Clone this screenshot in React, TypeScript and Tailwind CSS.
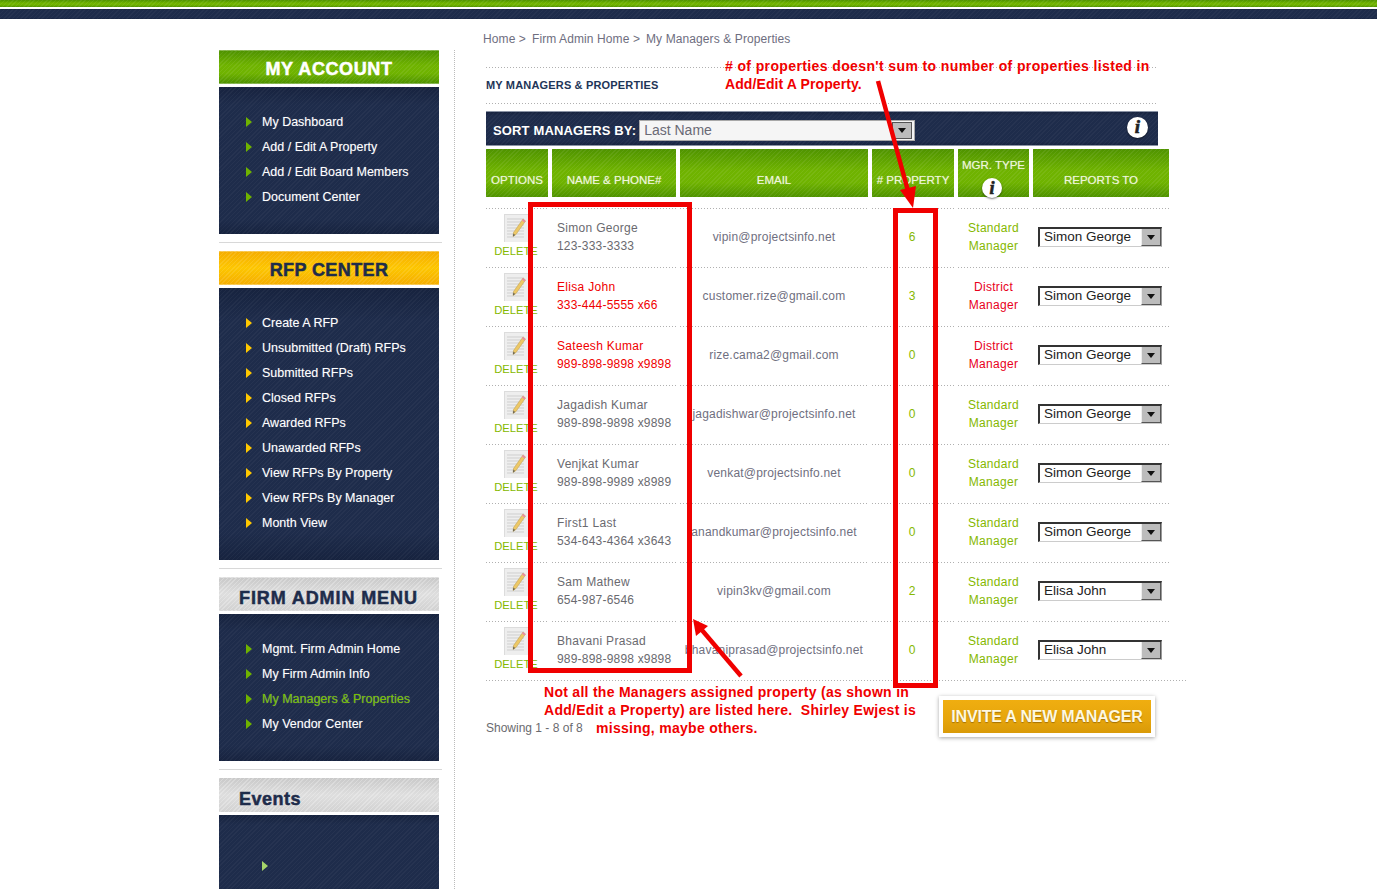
import React from 'react';

const GREEN_BAR = 'bg-[image:repeating-linear-gradient(135deg,rgba(255,255,255,0.07)_0_1px,transparent_1px_3px),linear-gradient(180deg,#4f9300,#6fb300_45%,#6fb300_70%,#4f9300)]';
const NAVY_BAR = 'bg-[image:repeating-linear-gradient(135deg,rgba(255,255,255,0.035)_0_1px,transparent_1px_3px),linear-gradient(180deg,#17233f,#1e2c4b_12%,#1e2c4b_90%,#17233f)]';
const YELLOW_BAR = 'bg-[image:repeating-linear-gradient(135deg,rgba(255,255,255,0.1)_0_1px,transparent_1px_3px),linear-gradient(180deg,#f5ae00,#fdc600_50%,#f5ae00)]';
const ORANGE_BAR = 'bg-[image:linear-gradient(180deg,#f0ae10,#e6a50c_60%,#d99a08)]';
const GRAY_BAR = 'bg-[image:repeating-linear-gradient(135deg,rgba(255,255,255,0.25)_0_1px,transparent_1px_3px),linear-gradient(180deg,#c9c9c9,#dedede_50%,#d2d2d2)]';
const DOTS = 'h-px bg-[image:repeating-linear-gradient(90deg,#b0b0b0_0_1px,transparent_1px_3px)]';
const HEAD_TEXT = 'text-[11.5px] text-[#eef6dc] [text-shadow:0_0_1px_rgba(255,255,255,0.5)]';

const GROUPS = [
  {
    title: 'MY ACCOUNT', bar: GREEN_BAR, cls: 'text-white justify-center pt-[5px] tracking-[0.6px]', arrow: '#6fb300', panel: 'h-[147px]',
    items: ['My Dashboard', 'Add / Edit A Property', 'Add / Edit Board Members', 'Document Center'],
  },
  {
    title: 'RFP CENTER', bar: YELLOW_BAR, cls: 'text-[#1e2c4b] justify-center pt-[5px] tracking-[0.4px]', arrow: '#ffc800', panel: 'h-[272px]',
    items: ['Create A RFP', 'Unsubmitted (Draft) RFPs', 'Submitted RFPs', 'Closed RFPs', 'Awarded RFPs', 'Unawarded RFPs', 'View RFPs By Property', 'View RFPs By Manager', 'Month View'],
  },
  {
    title: 'FIRM ADMIN MENU', bar: GRAY_BAR, cls: 'text-[#1e2c4b] pl-5 pt-[8px] tracking-[0.9px]', arrow: '#6fb300', panel: 'h-[147px]',
    items: ['Mgmt. Firm Admin Home', 'My Firm Admin Info', 'My Managers & Properties', 'My Vendor Center'],
  },
];

const ROWS = [
  { name: 'Simon George', phone: '123-333-3333', email: 'vipin@projectsinfo.net', count: '6', type: 'Standard', boss: 'Simon George' },
  { name: 'Elisa John', phone: '333-444-5555 x66', email: 'customer.rize@gmail.com', count: '3', type: 'District', boss: 'Simon George', red: true },
  { name: 'Sateesh Kumar', phone: '989-898-9898 x9898', email: 'rize.cama2@gmail.com', count: '0', type: 'District', boss: 'Simon George', red: true },
  { name: 'Jagadish Kumar', phone: '989-898-9898 x9898', email: 'jagadishwar@projectsinfo.net', count: '0', type: 'Standard', boss: 'Simon George' },
  { name: 'Venjkat Kumar', phone: '989-898-9989 x8989', email: 'venkat@projectsinfo.net', count: '0', type: 'Standard', boss: 'Simon George' },
  { name: 'First1 Last', phone: '534-643-4364 x3643', email: 'anandkumar@projectsinfo.net', count: '0', type: 'Standard', boss: 'Simon George' },
  { name: 'Sam Mathew', phone: '654-987-6546', email: 'vipin3kv@gmail.com', count: '2', type: 'Standard', boss: 'Elisa John' },
  { name: 'Bhavani Prasad', phone: '989-898-9898 x9898', email: 'bhavaniprasad@projectsinfo.net', count: '0', type: 'Standard', boss: 'Elisa John' },
];

function Arrow({ color }: { color: string }) {
  return (
    <svg width="6" height="10" viewBox="0 0 6 10" className="shrink-0">
      <path d="M0 0 L6 5 L0 10 Z" fill={color} />
    </svg>
  );
}

function Info({ size = 21 }: { size?: number }) {
  return (
    <span
      className="flex items-center justify-center rounded-full bg-white font-['Liberation_Serif',serif] font-bold italic text-[#222] shadow-[0_1px_2px_rgba(0,0,0,0.5)] [-webkit-text-stroke:0.6px_#222]"
      style={{ width: size, height: size, fontSize: size - 2 }}
    >
      i
    </span>
  );
}

function NoteIcon() {
  return (
    <svg width="24" height="28" viewBox="0 0 24 28">
      <rect x="0" y="0" width="24" height="28" fill="#eeeeee" />
      <path d="M0 0.5H24M0.5 0V28" stroke="#dcdcdc" />
      <path d="M3 5H20M3 8H20M3 11H20M3 14H20M3 17H20M3 20H20M3 23H20" stroke="#cfcfcf" strokeWidth="1" />
      <path d="M19 5 L21.5 7 L12 20.5 L9 22.5 L9.5 18.5 Z" fill="#edc866" stroke="#b89a4c" strokeWidth="0.5" />
      <path d="M19 5 L21.5 7 L20.5 8.5 L18 6.5 Z" fill="#e88aa8" />
      <path d="M9 22.5 L9.5 19.5 L11 21 Z" fill="#555" />
    </svg>
  );
}

function FakeSelect({ value }: { value: string }) {
  return (
    <div className="flex h-5 w-[124px] items-center justify-between border-t-2 border-l-2 border-t-[#333] border-l-[#333] border-r border-b border-r-[#999] border-b-[#ccc] bg-white pl-1 text-[13.5px] text-[#222]">
      <span>{value}</span>
      <span className="flex h-[17px] w-5 items-center justify-center border-l border-[#eee] bg-[#bcbcbc] border-b border-b-[#555] border-r border-r-[#555]">
        <svg width="8" height="5" viewBox="0 0 8 5"><path d="M0 0H8L4 5Z" fill="#111" /></svg>
      </span>
    </div>
  );
}

function Sidebar() {
  return (
    <aside className="mt-[31px] w-[223px] shrink-0">
      {GROUPS.map((g) => (
        <div key={g.title}>
          <div className={`flex h-[34px] w-[220px] items-center border-y border-white/30 text-[18px] font-bold [-webkit-text-stroke:0.5px_currentColor] ${g.bar} ${g.cls}`}>
            {g.title}
          </div>
          <div className={`mt-[3px] flex w-[220px] flex-col gap-[7px] pl-[27px] pt-[26px] ${NAVY_BAR} ${g.panel}`}>
            {g.items.map((item) => (
              <div key={item} className={`flex h-[18px] items-center gap-[10px] text-[12.5px] [text-shadow:0_0_1px_rgba(255,255,255,0.35)] ${item === 'My Managers & Properties' ? 'text-[#76c200]' : 'text-white'}`}>
                <Arrow color={g.arrow} />
                {item}
              </div>
            ))}
          </div>
          <div className="mt-2 mb-2 h-px bg-[#d8d8d8]" />
        </div>
      ))}
      <div className={`flex h-[34px] w-[220px] items-center pl-5 pt-[9px] text-[18px] font-bold tracking-[0.5px] text-[#1e2c4b] [-webkit-text-stroke:0.5px_currentColor] ${GRAY_BAR}`}>Events</div>
      <div className={`mt-[3px] h-[80px] w-[220px] pl-[43px] pt-[46px] ${NAVY_BAR}`}>
        <Arrow color="#a5d56a" />
      </div>
    </aside>
  );
}

const HEADS = ['OPTIONS', 'NAME & PHONE#', 'EMAIL', '# PROPERTY'];

function Table() {
  return (
    <div className="grid w-[683px] grid-cols-[62px_124px_188px_82px_71px_136px] gap-x-1">
      {HEADS.map((h) => (
        <div key={h} className={`flex h-12 items-end justify-center pb-2 ${HEAD_TEXT} ${GREEN_BAR}`}>{h}</div>
      ))}
      <div className={`flex h-12 flex-col items-center pt-2 ${HEAD_TEXT} ${GREEN_BAR}`}>
        MGR. TYPE
        <span className="mr-[3px] mt-[4px]"><Info size={20} /></span>
      </div>
      <div className={`flex h-12 items-end justify-center pb-2 ${HEAD_TEXT} ${GREEN_BAR}`}>REPORTS TO</div>

      <div className="col-span-6 h-[11px]" />

      {ROWS.map((r) => (
        <React.Fragment key={r.name}>
          <div className="h-[59px]">
            <div className={DOTS} />
            <div className="flex flex-col items-center pr-[2px] pt-[5px] text-[11.2px] leading-none text-[#85b800]">
              <NoteIcon />
              <span className="mt-[4px]">DELETE</span>
            </div>
          </div>
          <div className="h-[59px]">
            <div className={DOTS} />
            <div className={`pl-[5px] pt-[10px] text-[12px] leading-[18px] tracking-[0.3px] ${r.red ? 'text-[#f00000]' : 'text-[#6a6a6f]'}`}>
              <div>{r.name}</div>
              <div className="tracking-[0.2px]">{r.phone}</div>
            </div>
          </div>
          <div className="h-[59px]">
            <div className={DOTS} />
            <div className="flex h-[56px] items-center justify-center whitespace-nowrap text-[12px] tracking-[0.2px] text-[#6f6f80]">{r.email}</div>
          </div>
          <div className="h-[59px]">
            <div className={DOTS} />
            <div className="flex h-[56px] items-center justify-center pr-[2px] text-[12px] font-medium text-[#85b800]">{r.count}</div>
          </div>
          <div className="h-[59px]">
            <div className={DOTS} />
            <div className={`flex h-[56px] flex-col items-center justify-center text-[12px] leading-[18px] tracking-[0.3px] ${r.red ? 'text-[#e8001c]' : 'text-[#85b800]'}`}>
              <div>{r.type}</div>
              <div>Manager</div>
            </div>
          </div>
          <div className="h-[59px]">
            <div className={DOTS} />
            <div className="flex h-[56px] items-center pl-[5px]"><FakeSelect value={r.boss} /></div>
          </div>
        </React.Fragment>
      ))}
    </div>
  );
}

function Notes() {
  return (
    <>
      {/* review markup drawn over the page */}
      <div className="absolute left-[239px] top-[38px] whitespace-nowrap text-[14px] font-bold leading-[18px] tracking-[0.38px] text-[#f00000]">
        # of properties doesn't sum to number of properties listed in<br />
        <span className="tracking-[0.1px]">Add/Edit A Property.</span>
      </div>
      <div className="absolute left-[58px] top-[664px] whitespace-nowrap text-[14px] font-bold leading-[18px] tracking-[0.28px] text-[#f00000]">
        Not all the Managers assigned property (as shown in<br />
        Add/Edit a Property) are listed here.&nbsp; Shirley Ewjest is<br />
        <span className="ml-[52px]">missing, maybe others.</span>
      </div>
      <div className="absolute left-[42px] top-[183px] h-[471px] w-[164px] border-[5px] border-[#f00000]" />
      <div className="absolute left-[407px] top-[189px] h-[480px] w-[45px] border-[5px] border-[#f00000]" />
      <svg className="absolute left-0 top-0 overflow-visible" width="1" height="1">
        <path d="M392 62 L422 172" stroke="#f00000" strokeWidth="4.5" fill="none" />
        <path d="M414 171 L430 167 L427 189 Z" fill="#f00000" />
        <path d="M255 657 L215 610" stroke="#f00000" strokeWidth="4.5" fill="none" />
        <path d="M207 600 L222 607 L210 617 Z" fill="#f00000" />
      </svg>
    </>
  );
}

export default function App() {
  return (
    <div className="h-[889px] overflow-hidden bg-white font-['Liberation_Sans',Arial,sans-serif]">
      <div className={`h-[7px] ${GREEN_BAR}`} />
      <div className={`mt-[2px] h-[10px] ${NAVY_BAR}`} />

      <div className="flex pl-[219px]">
        <Sidebar />
        <div className="ml-3 mt-[31px] h-[840px] w-px bg-[image:repeating-linear-gradient(180deg,#bbb_0_1px,transparent_1px_2px)]" />

        <main className="relative ml-[31px] w-[700px]">
          <div className="-ml-[3px] mt-[12px] flex h-4 items-center gap-[6px] text-[12px] tracking-[0.1px] text-[#6e6e80]">
            <span>Home &gt;</span><span>Firm Admin Home &gt;</span><span>My Managers &amp; Properties</span>
          </div>

          <div className={`mt-[20px] w-[672px] ${DOTS}`} />
          <div className="flex h-[35px] items-center text-[11px] font-bold tracking-[0.17px] text-[#1e3558]">MY MANAGERS &amp; PROPERTIES</div>
          <div className={`w-[672px] ${DOTS}`} />

          <div className={`mt-[7px] flex h-[35px] w-[672px] items-center border-y border-[#8a93a5] pl-[7px] pr-[10px] ${NAVY_BAR}`}>
            <span className="pt-[4px] text-[13px] font-bold tracking-[0.15px] text-white">SORT MANAGERS BY:</span>
            <div className="ml-[3px] mt-[3px] flex h-[21px] w-[276px] items-center justify-between border border-[#a8a8a8] bg-[#f5f5f5] pl-1 pr-[2px] text-[14px] text-[#6a6a75]">
              <span>Last Name</span>
              <span className="flex h-[17px] w-5 items-center justify-center border border-[#555] bg-[#bcbcbc]">
                <svg width="8" height="5" viewBox="0 0 8 5"><path d="M0 0H8L4 5Z" fill="#111" /></svg>
              </span>
            </div>
            <span className="ml-auto -mt-[2px]"><Info /></span>
          </div>

          <div className="mt-[3px]"><Table /></div>
          <div className={`w-[700px] ${DOTS}`} />

          <div className="flex w-[669px] items-start justify-between">
            <span className="mt-[38px] text-[12px] text-[#6a6a6f]">Showing 1 - 8 of 8</span>
            <div className="mt-[15px] border-[4px] border-white shadow-[0_1px_4px_rgba(0,0,0,0.35)]">
              <div className={`flex h-[33px] w-[208px] items-center justify-center text-[16px] font-bold tracking-[-0.2px] text-[#fff8e0] [text-shadow:0_1px_1px_rgba(120,80,0,0.6)] ${ORANGE_BAR}`}>
                INVITE A NEW MANAGER
              </div>
            </div>
          </div>

          <Notes />
        </main>
      </div>
    </div>
  );
}
